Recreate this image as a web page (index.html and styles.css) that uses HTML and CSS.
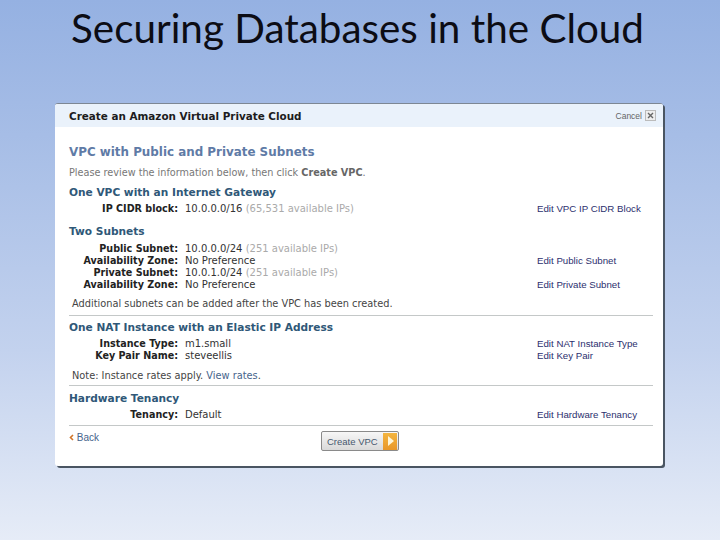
FILE: index.html
```html
<!DOCTYPE html>
<html lang="en">
<head>
    <meta charset="UTF-8">
    <title>Securing Databases in the Cloud</title>
    <link rel="stylesheet" href="styles.css">
</head>
<body>
    <h1 class="slide-title">Securing Databases in the Cloud</h1>

    <div class="dialog">
        <div class="dialog-header">
            <span class="dialog-title">Create an Amazon Virtual Private Cloud</span>
            <span class="cancel">Cancel</span>
            <span class="close-box">
                <svg width="7" height="7" viewBox="0 0 7 7"><path d="M1 1L6 6M6 1L1 6" stroke="#666" stroke-width="1.4" fill="none"/></svg>
            </span>
        </div>

        <div class="dialog-body">
            <h2>VPC with Public and Private Subnets</h2>
            <p class="intro">Please review the information below, then click <strong>Create VPC</strong>.</p>

            <h3 class="first">One VPC with an Internet Gateway</h3>
            <div class="row">
                <span class="label">IP CIDR block:</span>
                <span class="value">10.0.0.0/16 <span class="muted">(65,531 available IPs)</span></span>
                <a class="edit">Edit VPC IP CIDR Block</a>
            </div>

            <h3 class="subnets">Two Subnets</h3>
            <div class="row">
                <span class="label">Public Subnet:</span>
                <span class="value">10.0.0.0/24 <span class="muted">(251 available IPs)</span></span>
                <a class="edit"></a>
            </div>
            <div class="row">
                <span class="label">Availability Zone:</span>
                <span class="value">No Preference</span>
                <a class="edit">Edit Public Subnet</a>
            </div>
            <div class="row">
                <span class="label">Private Subnet:</span>
                <span class="value">10.0.1.0/24 <span class="muted">(251 available IPs)</span></span>
                <a class="edit"></a>
            </div>
            <div class="row">
                <span class="label">Availability Zone:</span>
                <span class="value">No Preference</span>
                <a class="edit">Edit Private Subnet</a>
            </div>
            <p class="note">Additional subnets can be added after the VPC has been created.</p>

            <div class="section">
                <h3>One NAT Instance with an Elastic IP Address</h3>
                <div class="row">
                    <span class="label">Instance Type:</span>
                    <span class="value">m1.small</span>
                    <a class="edit">Edit NAT Instance Type</a>
                </div>
                <div class="row">
                    <span class="label">Key Pair Name:</span>
                    <span class="value">steveellis</span>
                    <a class="edit">Edit Key Pair</a>
                </div>
                <p class="note rates-note">Note: Instance rates apply. <a class="rates">View rates</a>.</p>
            </div>

            <div class="section tenancy">
                <h3>Hardware Tenancy</h3>
                <div class="row">
                    <span class="label">Tenancy:</span>
                    <span class="value">Default</span>
                    <a class="edit">Edit Hardware Tenancy</a>
                </div>
            </div>

            <div class="dialog-footer">
                <a class="back">
                    <svg width="5" height="7" viewBox="0 0 5 7"><path d="M4 1L1.5 3.5L4 6" stroke="#d2762a" stroke-width="1.6" fill="none"/></svg>
                    Back
                </a>
                <button class="create-button">
                    Create VPC
                    <span class="create-icon">
                        <svg width="7" height="10" viewBox="0 0 7 10"><path d="M1 0L7 5L1 10Z" fill="#fff6d8"/></svg>
                    </span>
                </button>
            </div>
        </div>
    </div>
</body>
</html>
```

FILE: styles.css
```css
body {
    margin: 0;
    height: 540px;
    overflow: hidden;
    background: linear-gradient(#95b1e2 0%, #a6bde6 25%, #c3d2ee 65%, #e6ecf7 100%);
    font-family: "DejaVu Sans", sans-serif;
}

.slide-title {
    margin: 0;
    height: 103px;
    padding-right: 5px;
    text-align: center;
    font-family: Lato, sans-serif;
    font-size: 40.4px;
    font-weight: 400;
    line-height: 56px;
    color: #0c0c14;
}

.dialog {
    width: 608px;
    height: 362px;
    margin-left: 55px;
    background: #fff;
    border-radius: 3px;
    border-top: 1px solid #7d8794;
    box-shadow: 2px 2px 0 #4a5562;
    overflow: hidden;
}

.dialog-header {
    display: flex;
    align-items: center;
    height: 23px;
    padding: 0 7px 0 14px;
    background: #eaf2fb;
}

.dialog-title {
    flex: 1;
    font-size: 10.4px;
    font-weight: 700;
    color: #1c1c20;
}

.cancel {
    font-family: "Liberation Sans", sans-serif;
    font-size: 8.5px;
    color: #666;
    margin-right: 3px;
}

.close-box {
    display: flex;
    align-items: center;
    justify-content: center;
    width: 9px;
    height: 9px;
    border: 1px solid #bbb;
    background: #eee;
}

.dialog-body {
    padding: 0 10px 0 14px;
}

h2 {
    margin: 18px 0 0;
    font-size: 11.9px;
    line-height: 15px;
    font-weight: 700;
    color: #5f7ba6;
}

.intro {
    margin: 6px 0 0;
    font-size: 9.7px;
    line-height: 13px;
    color: #777;
}

.intro strong {
    color: #666;
}

h3 {
    margin: 0;
    font-size: 10.6px;
    line-height: 14px;
    font-weight: 700;
    color: #2f5878;
}

h3.first {
    margin-top: 6px;
}

h3.subnets {
    margin-top: 9px;
    margin-bottom: 5px;
}

.row {
    display: grid;
    grid-template-columns: 109px 345px 1fr;
    column-gap: 7px;
    font-size: 10px;
    line-height: 12px;
    color: #333;
}

h3 + .row {
    margin-top: 4px;
}

h3.subnets + .row {
    margin-top: 0;
}

.label {
    text-align: right;
    font-size: 9.6px;
    font-weight: 700;
    color: #222;
    white-space: nowrap;
}

.value {
    white-space: nowrap;
}

.muted {
    color: #aaa;
}

.edit {
    font-family: "Liberation Sans", sans-serif;
    font-size: 9.7px;
    color: #2c2f6e;
    white-space: nowrap;
}

.note {
    margin: 6px 0 0 3px;
    font-size: 9.8px;
    line-height: 13px;
    color: #444;
}

.note.rates-note {
    margin-top: 7px;
}

.rates {
    color: #46648c;
}

.section {
    border-top: 1px solid #c4c8c8;
    margin-top: 5px;
    padding-top: 4px;
}

.section.tenancy {
    margin-top: 3px;
    padding-top: 5px;
}

.dialog-footer {
    display: flex;
    align-items: flex-start;
    border-top: 1px solid #c4c8c8;
    margin-top: 4px;
    padding-top: 5px;
}

.back {
    flex: 0 0 252px;
    margin-top: 1px;
    font-family: "Liberation Sans", sans-serif;
    font-size: 10px;
    line-height: 12px;
    color: #46648c;
}

.create-button {
    display: flex;
    align-items: center;
    justify-content: space-between;
    width: 78px;
    height: 20px;
    padding: 0 1px 0 5px;
    border: 1px solid #8a8a8a;
    border-radius: 2px;
    background: linear-gradient(#f7f7f7, #d9d9d9);
    font-family: "Liberation Sans", sans-serif;
    font-size: 9.5px;
    color: #46586e;
}

.create-icon {
    display: flex;
    align-items: center;
    justify-content: center;
    width: 14px;
    height: 17px;
    background: linear-gradient(#f4b53f, #e8972a);
}
```
